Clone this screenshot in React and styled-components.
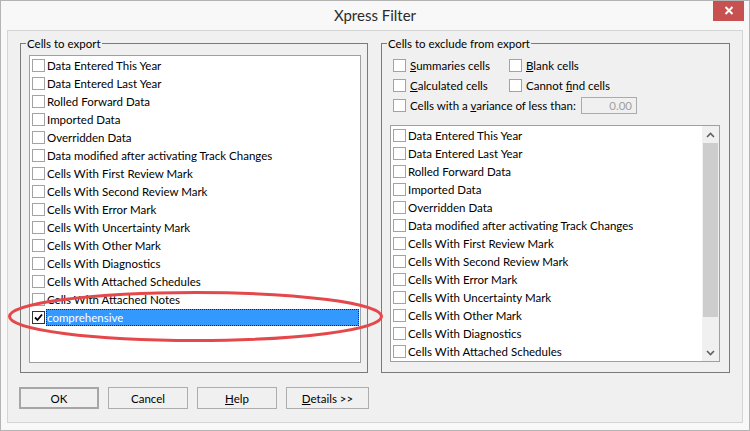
import React from 'react';
import styled, { createGlobalStyle } from 'styled-components';

const GlobalStyle = createGlobalStyle`
  html, body {
    margin: 0;
    padding: 0;
    background: #ffffff;
  }
  body {
    font-family: Lato, "Noto Sans", sans-serif;
    font-size: 11.5px;
    color: #000;
  }
`;

const ITEMS = [
  'Data Entered This Year',
  'Data Entered Last Year',
  'Rolled Forward Data',
  'Imported Data',
  'Overridden Data',
  'Data modified after activating Track Changes',
  'Cells With First Review Mark',
  'Cells With Second Review Mark',
  'Cells With Error Mark',
  'Cells With Uncertainty Mark',
  'Cells With Other Mark',
  'Cells With Diagnostics',
  'Cells With Attached Schedules',
  'Cells With Attached Notes',
];

const Window = styled.div`
  position: relative;
  box-sizing: border-box;
  width: 750px;
  height: 431px;
  display: flex;
  flex-direction: column;
  padding: 0 6px 7px 6px;
  background: #f8f8f8;
  border: 1px solid #b4b4b4;
  overflow: hidden;
`;

const TitleBar = styled.div`
  height: 29px;
  flex-shrink: 0;
  display: flex;
  align-items: center;
  justify-content: center;
  font-size: 15px;
  color: #2b2b2b;
  padding-bottom: 1px;
  box-sizing: border-box;
`;

const CloseButton = styled.div`
  position: absolute;
  top: -1px;
  right: 5px;
  width: 31px;
  height: 21px;
  background: #c75050;
  display: flex;
  align-items: center;
  justify-content: center;
`;

const Body = styled.div`
  flex: 1;
  display: flex;
  flex-direction: column;
  background: #f0f0f0;
  border: 1px solid #d4d4d4;
  padding: 12px 12px 13px 12px;
`;

const Groups = styled.div`
  display: flex;
  gap: 13px;
  height: 330px;
`;

const GroupBox = styled.div`
  position: relative;
  box-sizing: border-box;
  width: ${(p) => p.width}px;
  display: flex;
  flex-direction: column;
  border: 1px solid #7a7a7a;
  padding: ${(p) => p.pad};
`;

const Legend = styled.span`
  position: absolute;
  top: -8px;
  left: 5px;
  padding: 0 1px 0 1px;
  line-height: 15px;
  background: #f0f0f0;
  color: #000;
`;

const ListBox = styled.div`
  flex: 1;
  display: flex;
  background: #ffffff;
  border: 1px solid #a0a0a0;
  overflow: hidden;
  min-height: 0;
`;

const Rows = styled.div`
  flex: 1;
  overflow: hidden;
`;

const Row = styled.div`
  height: 18px;
  display: flex;
  align-items: center;
  padding-left: 2px;
  white-space: nowrap;
`;

const Box = styled.span`
  box-sizing: border-box;
  width: 13px;
  height: 13px;
  flex-shrink: 0;
  display: flex;
  align-items: center;
  justify-content: center;
  background: #ffffff;
  border: 1px solid ${(p) => (p.dark ? '#333333' : '#a3a3a3')};
`;

const ItemText = styled.span`
  margin-left: 1px;
  padding: 0 1px;
  height: 17px;
  line-height: 17px;
  box-sizing: border-box;
  ${(p) =>
    p.selected &&
    `
    flex: 1;
    margin-right: 1px;
    background: #3399ff;
    color: #ffffff;
    outline: 1px dotted #222;
    outline-offset: -1px;
  `}
`;

const ScrollBar = styled.div`
  width: 17px;
  flex-shrink: 0;
  display: flex;
  flex-direction: column;
  background: #f0f0f0;
`;

const ScrollArrow = styled.div`
  height: 17px;
  display: flex;
  align-items: center;
  justify-content: center;
`;

const Thumb = styled.div`
  height: 174px;
  margin: 0 1px;
  background: #cdcdcd;
`;

const Track = styled.div`
  flex: 1;
`;

const Options = styled.div`
  display: grid;
  grid-template-columns: 116px auto;
  grid-auto-rows: 20px;
  margin-left: 3px;
  margin-bottom: 10px;
`;

const Option = styled.label`
  display: flex;
  align-items: center;
  gap: 4px;
  white-space: nowrap;
  grid-column: ${(p) => (p.wide ? '1 / span 2' : 'auto')};
`;

const OptionLabel = styled.span`
  width: ${(p) => (p.width ? `${p.width}px` : 'auto')};
`;

const NumberBox = styled.div`
  box-sizing: border-box;
  width: 56px;
  height: 17px;
  border: 1px solid #ababab;
  background: #f0f0f0;
  color: #a0a0a0;
  text-align: right;
  padding-right: 4px;
  line-height: 15px;
`;

const ButtonRow = styled.div`
  display: flex;
  gap: 9px;
  margin-top: 14px;
  margin-left: -1px;
`;

const Button = styled.button`
  box-sizing: border-box;
  width: ${(p) => p.width || 80}px;
  height: 22px;
  padding: 0;
  font-family: inherit;
  font-size: 11.5px;
  color: #000;
  background: #f0f0f0;
  border: ${(p) => (p.primary ? '2px solid #a6a6a6' : '1px solid #adadad')};
`;

const Highlight = styled.svg`
  position: absolute;
  top: -1px;
  left: -1px;
  pointer-events: none;
`;

const Check = () => (
  <svg width="9" height="9" viewBox="0 0 9 9">
    <path d="M1 4.5 L3.5 7 L8 1.5" fill="none" stroke="#000" strokeWidth="1.8" />
  </svg>
);

const CheckBox = ({ checked }) => <Box dark={checked}>{checked && <Check />}</Box>;

const Chevron = ({ up }) => (
  <svg width="9" height="6" viewBox="0 0 9 6">
    <path
      d={up ? 'M1 5 L4.5 1.5 L8 5' : 'M1 1 L4.5 4.5 L8 1'}
      fill="none"
      stroke="#606060"
      strokeWidth="1.6"
    />
  </svg>
);

const App = () => {
  return (
    <>
      <GlobalStyle />
      <Window>
        <TitleBar>Xpress Filter</TitleBar>
        <CloseButton>
          <svg width="10" height="9" viewBox="0 0 10 9">
            <path d="M1.5 1 L8.5 8 M8.5 1 L1.5 8" stroke="#fff" strokeWidth="2" />
          </svg>
        </CloseButton>
        <Body>
          <Groups>
            <GroupBox width={348} pad="11px 6px 9px 8px">
              <Legend>Cells to export</Legend>
              <ListBox>
                <Rows>
                  {ITEMS.map((item) => (
                    <Row key={item}>
                      <CheckBox />
                      <ItemText>{item}</ItemText>
                    </Row>
                  ))}
                  <Row>
                    <CheckBox checked />
                    <ItemText selected>comprehensive</ItemText>
                  </Row>
                </Rows>
              </ListBox>
            </GroupBox>
            <GroupBox width={349} pad="11px 9px 10px 8px">
              <Legend>Cells to exclude from export</Legend>
              <Options>
                <Option>
                  <CheckBox />
                  <span>
                    <u>S</u>ummaries cells
                  </span>
                </Option>
                <Option>
                  <CheckBox />
                  <span>
                    <u>B</u>lank cells
                  </span>
                </Option>
                <Option>
                  <CheckBox />
                  <span>
                    <u>C</u>alculated cells
                  </span>
                </Option>
                <Option>
                  <CheckBox />
                  <span>
                    Cannot <u>f</u>ind cells
                  </span>
                </Option>
                <Option wide>
                  <CheckBox />
                  <OptionLabel width={167}>
                    Cells with a <u>v</u>ariance of less than:
                  </OptionLabel>
                  <NumberBox>0.00</NumberBox>
                </Option>
              </Options>
              <ListBox>
                <Rows>
                  {ITEMS.slice(0, 13).map((item) => (
                    <Row key={item}>
                      <CheckBox />
                      <ItemText>{item}</ItemText>
                    </Row>
                  ))}
                </Rows>
                <ScrollBar>
                  <ScrollArrow>
                    <Chevron up />
                  </ScrollArrow>
                  <Thumb />
                  <Track />
                  <ScrollArrow>
                    <Chevron />
                  </ScrollArrow>
                </ScrollBar>
              </ListBox>
            </GroupBox>
          </Groups>
          <ButtonRow>
            <Button primary>OK</Button>
            <Button>Cancel</Button>
            <Button>
              <u>H</u>elp
            </Button>
            <Button width={83}>
              <u>D</u>etails &gt;&gt;
            </Button>
          </ButtonRow>
        </Body>
        <Highlight width="750" height="431" viewBox="0 0 750 431">
          <ellipse cx="195.5" cy="316.5" rx="186" ry="24" fill="none" stroke="#e5484a" strokeWidth="3" />
        </Highlight>
      </Window>
    </>
  );
};

export default App;
